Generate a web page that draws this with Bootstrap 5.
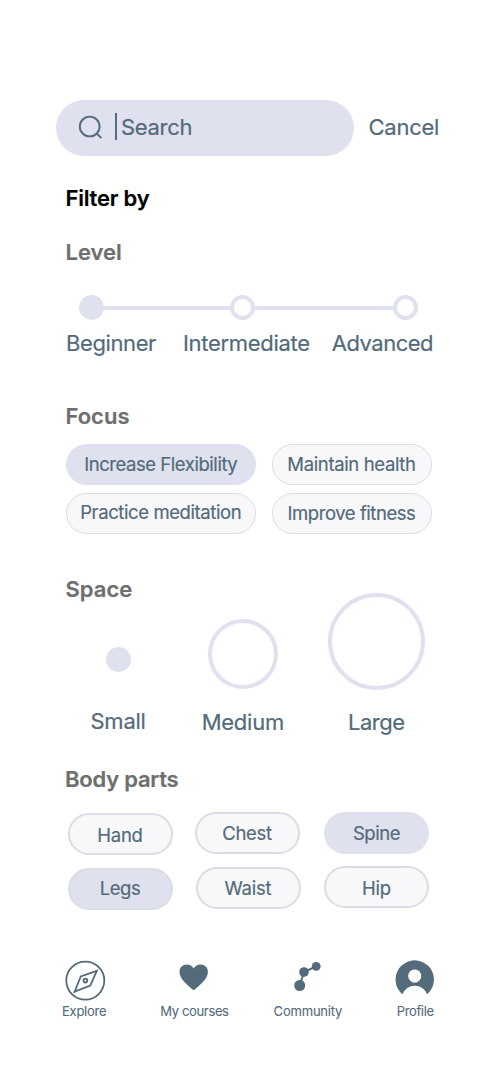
<!DOCTYPE html>
<html lang="en">
<head>
<meta charset="utf-8">
<meta name="viewport" content="width=device-width, initial-scale=1">
<title>Search filters</title>
<link href="https://cdn.jsdelivr.net/npm/bootstrap@5.3.0/dist/css/bootstrap.min.css" rel="stylesheet">
<style>
:root{--ink:#536b7a;--lav:#e0e1ef;--pale:#f8f8fb;--line:#dadde3}
body{font-family:Inter,"Liberation Sans",sans-serif;color:var(--ink);font-size:22px;line-height:28px;background:#fff;-webkit-text-stroke:.2px}
.screen{width:498px;height:1080px;padding:100px 56px 0 56px}
.screen span,.screen h1,.screen h2{white-space:nowrap}
h1,h2{font-size:22px;line-height:28px;font-weight:600;margin:0 0 0 9.5px;color:#6e6e6e}
h1{color:#000;margin-top:28px;letter-spacing:-.22px}
.t-level{margin-top:26px}
.t-focus{margin-top:45px}
.t-space{margin-top:41px}
.t-parts{margin-top:29px;margin-left:9px;letter-spacing:-.22px}

/* tracking steps */
.ls-2{letter-spacing:-.2px}
.ls-25{letter-spacing:-.25px}
.ls-3{letter-spacing:-.3px}
.ls-35{letter-spacing:-.36px}
.ls-4{letter-spacing:-.4px}
.ls-45{letter-spacing:-.45px}
.ls-5{letter-spacing:-.5px}

.search-pill{width:297.5px;height:56px;background:var(--lav);padding:13px 0 0 22px}
.caret-bar{width:2px;height:27px;background:var(--ink);margin:0 4px 0 11px}
.cancel{margin:13px 0 0 15px}

.track{height:25px;margin:29px 0 0 22.5px;width:339.5px}
.dot{width:25px;height:25px;border:4px solid var(--lav);border-radius:50%;flex:none}
.dot.on{background:var(--lav)}
.rail{height:4px;background:var(--lav);margin:1px -1px 0}
.rail-a{width:128.500px}
.level-labels{margin:9px 0 0 10px}
.l-mid{margin-left:27px}
.l-end{margin-left:22px}

.focus-grid{display:grid;grid-template-columns:189.500px 160px;gap:8px 16px;margin:14px 0 0 10px}
.chip{height:41px;border:1px solid var(--line);background:var(--pale);border-radius:21px;font-size:18.5px;line-height:24px;display:flex;justify-content:center;padding-top:6.5px}
.chip.low{padding-top:5.500px}
.chip.on{background:var(--lav)}
.chip.plain{border-color:var(--lav)}

.sizes{margin:-10px 0 0 49.500px;height:115px}
.s-small{margin-top:54px}
.s-mid{width:70px;height:70px;margin:25.500px 0 0 77.500px}
.s-big{width:97px;height:97px;margin-left:50px}
.size-labels{margin-left:34.500px}
.z-small{margin-top:-1px}
.z-mid{margin-left:56px}
.z-big{margin-left:64px}

.parts{margin:19px 0 0 11.500px}
.parts .chip{width:105px;border-width:2px;height:42px;padding-top:7px}
.parts .chip.drop{padding-top:8px}
.parts .chip.lift{padding-top:6px}
.p-a{width:127px;padding-top:1.300px}
.p-b{width:129.500px}
.gap-13{margin-top:13px}
.gap-12{margin-top:12px}
.nudge{margin-left:1px}

.tabs{font-size:13px;line-height:16px;height:60px;margin-top:48.700px;-webkit-text-stroke:.1px}
.tab-labels{margin-left:6px}
.n-b{margin-left:54px}
.n-c{margin-left:45px}
.n-d{margin-left:54.500px}
</style>
</head>
<body>
<main class="screen overflow-hidden">
  <div class="d-flex align-items-start">
    <div class="search-pill rounded-pill d-flex flex-shrink-0">
      <svg width="26" height="27" viewBox="0 0 26 27" fill="none" stroke="#536b7a" stroke-width="1.9"><circle cx="11.7" cy="13.5" r="9.9"/><path d="M18.7 20.5l4.700 4.700"/></svg>
      <div class="caret-bar"></div>
      <span class="ls-3">Search</span>
    </div>
    <span class="cancel ls-25">Cancel</span>
  </div>
  <h1>Filter by</h1>

  <h2 class="t-level">Level</h2>
  <div class="track d-flex align-items-center">
    <div class="dot on"></div><div class="rail rail-a"></div><div class="dot"></div><div class="rail flex-fill"></div><div class="dot"></div>
  </div>
  <div class="level-labels d-flex">
    <span class="ls-4">Beginner</span><span class="l-mid ls-3">Intermediate</span><span class="l-end ls-5">Advanced</span>
  </div>

  <h2 class="t-focus">Focus</h2>
  <div class="focus-grid">
    <div class="chip on plain"><span class="ls-45">Increase Flexibility</span></div>
    <div class="chip"><span class="ls-35">Maintain health</span></div>
    <div class="chip low"><span class="ls-4">Practice meditation</span></div>
    <div class="chip"><span class="ls-45">Improve fitness</span></div>
  </div>

  <h2 class="t-space">Space</h2>
  <div class="sizes d-flex">
    <div class="dot on s-small"></div>
    <div class="dot s-mid"></div>
    <div class="dot s-big"></div>
  </div>
  <div class="size-labels d-flex">
    <span class="z-small ls-25">Small</span><span class="z-mid ls-25">Medium</span><span class="z-big ls-45">Large</span>
  </div>

  <h2 class="t-parts">Body parts</h2>
  <div class="parts d-flex">
    <div class="p-a">
      <div class="chip drop"><span class="ls-25">Hand</span></div>
      <div class="chip on gap-13 lift"><span class="ls-45">Legs</span></div>
    </div>
    <div class="p-b">
      <div class="chip"><span class="ls-3">Chest</span></div>
      <div class="chip gap-13 nudge"><span class="ls-2">Waist</span></div>
    </div>
    <div>
      <div class="chip on plain"><span class="ls-45">Spine</span></div>
      <div class="chip gap-12 drop"><span class="ls-2">Hip</span></div>
    </div>
  </div>

  <nav class="tabs">
    <svg class="d-block" width="386" height="44" viewBox="56 959 386 44" fill="#536b7a">
      <!-- compass -->
      <g fill="none" stroke="#536b7a" stroke-width="1.8"><circle cx="85.3" cy="980.6" r="19"/><path d="M96.8 970.8L90.3 985.6 74.6 991.6 80.8 976.4Z"/><circle cx="85.4" cy="980.6" r="1.9"/></g>
      <!-- heart -->
      <path d="M193.7 990.3C188 985.5 179.5 979.5 179.5 971.8c0-4.3 3.3-7.3 7.2-7.3 3 0 5.6 1.5 7 3.9 1.4-2.4 4-3.9 7-3.9 3.9 0 7.2 3 7.2 7.3 0 7.7-8.5 13.7-14.2 18.5Z"/>
      <!-- linked nodes -->
      <path d="M299.7 985.5L304 972l12.2-5.7" fill="none" stroke="#536b7a" stroke-width="2"/><circle cx="299.7" cy="985.5" r="5.5"/><circle cx="304" cy="972" r="4.8"/><circle cx="316.2" cy="966.3" r="4.4"/>
      <!-- person -->
      <path fill-rule="evenodd" d="M402.5 994.3A19.2 19.2 0 1 1 427 994.3 13 13 0 0 0 402.5 994.3ZM414.7 969.5a6.5 6.5 0 1 0 .01 0Z"/>
    </svg>
    <div class="tab-labels d-flex">
      <span class="ls-25">Explore</span><span class="n-b ls-35">My courses</span><span class="n-c ls-2">Community</span><span class="n-d ls-35">Profile</span>
    </div>
  </nav>
</main>
<script src="https://cdn.jsdelivr.net/npm/bootstrap@5.3.0/dist/js/bootstrap.bundle.min.js"></script>
</body>
</html>
